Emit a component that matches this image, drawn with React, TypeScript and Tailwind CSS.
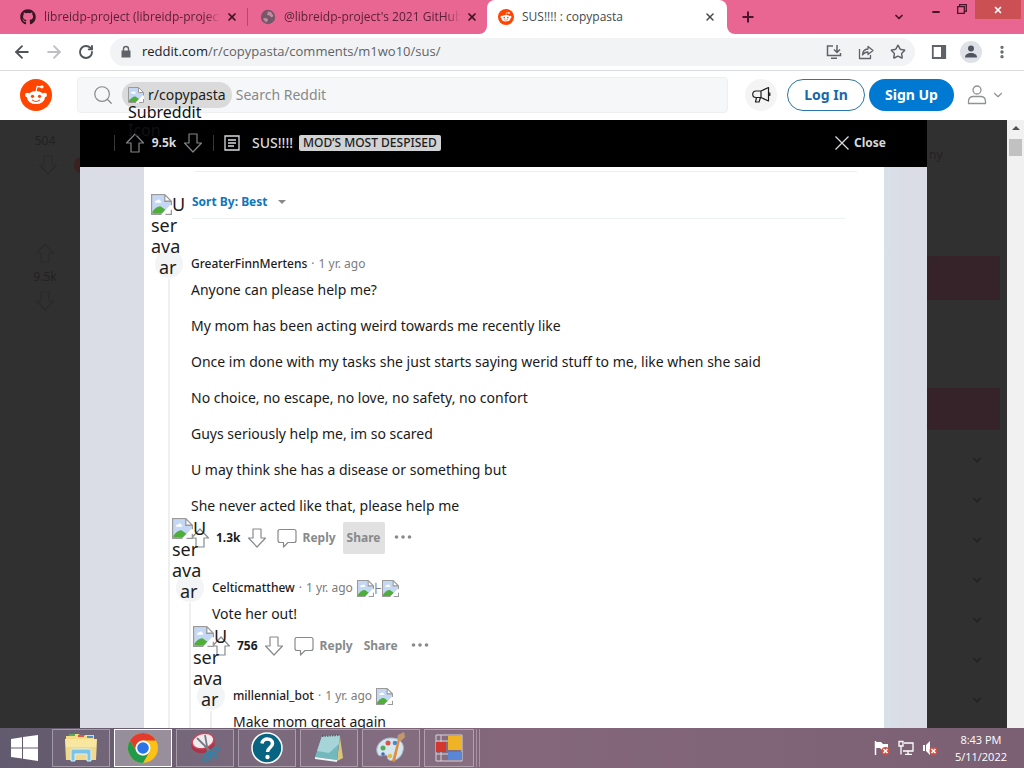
import React from "react";
import {
  ArrowLeft,
  ArrowRight,
  RotateCw,
  Star,
  Plus,
  X,
  ChevronDown,
  EllipsisVertical,
  Search,
  Minus,
} from "lucide-react";
import { FaGithub } from "react-icons/fa";

const noto = "font-['Noto_Sans',sans-serif]";
const chrome = "font-['Open_Sans','Noto_Sans',sans-serif]";

function Snoo({ className }: { className: string }) {
  return (
    <svg viewBox="0 0 20 20" className={className} aria-hidden="true">
      <circle cx="10" cy="10" r="10" fill="#ff4500" />
      <g fill="#fff">
        <ellipse cx="10" cy="11.6" rx="5.6" ry="4.1" />
        <circle cx="4.6" cy="10" r="1.45" />
        <circle cx="15.4" cy="10" r="1.45" />
        <circle cx="13.7" cy="4.9" r="1.05" />
      </g>
      <path d="M10 8l.7-3.4 2.6.5" fill="none" stroke="#fff" strokeWidth=".7" />
      <circle cx="7.8" cy="10.8" r="1" fill="#ff4500" />
      <circle cx="12.2" cy="10.8" r="1" fill="#ff4500" />
      <path d="M7.8 13.2c1.2 1 3.2 1 4.4 0" fill="none" stroke="#ff4500" strokeWidth=".7" strokeLinecap="round" />
    </svg>
  );
}

function BrokenImage({ className }: { className: string }) {
  return (
    <svg viewBox="0 0 16 16" className={className} aria-hidden="true">
      <path d="M.5.5h10l5 5v10H.5z" fill="#fff" />
      <path d="M1 1h9.500v4.500H15V10L9 15H1z" fill="#c4d8f6" />
      <path d="M3 6.200c0-1 1-1.600 1.800-1.200.6-1.200 2.400-.8 2.400.4.9 0 .9 1.300 0 1.300H3.600z" fill="#fff" />
      <path d="M1 15v-1.500C3 11 5.500 9 7.500 9.500L11 12l-3 3z" fill="#4fae3a" />
      <path d="M15.500 7.500L8 15.500h3l4.500-4z" fill="#fff" />
      <path d="M8 15.500H.5V.5h10l5 5v3M15.500 12v3.500H11M10.500.5v5h5" fill="none" stroke="#9a9a9a" />
    </svg>
  );
}

function VoteArrow({ down, className }: { down?: boolean; className: string }) {
  return (
    <svg viewBox="0 0 20 20" className={className} aria-hidden="true">
      <path
        d={down ? "M10 19L1.500 10H6V1h8v9h4.500z" : "M10 1l8.500 9H14v9H6v-9H1.500z"}
        fill="none"
        stroke="currentColor"
        strokeWidth="1.200"
        strokeLinejoin="round"
      />
    </svg>
  );
}

function Bubble() {
  return (
    <svg viewBox="0 0 20 20" className="size-5" fill="none" stroke="currentColor" strokeWidth="1.200" aria-hidden="true">
      <path d="M3 1.500h14q2 0 2 2v9q0 2-2 2h-6L6.500 19v-4.500H3q-2 0-2-2v-9q0-2 2-2z" strokeLinejoin="round" />
    </svg>
  );
}

function Tab({ title, icon }: { title: string; icon: React.ReactNode }) {
  return (
    <div className="flex w-[239px] min-w-0 items-center pr-[9px] pl-3">
      {icon}
      <span className="ml-2 min-w-0 flex-1 overflow-hidden whitespace-nowrap text-[#5c2038] [mask-image:linear-gradient(to_right,#000_92%,transparent)]">
        {title}
      </span>
      <button aria-label="Close tab" className="ml-[6px] text-[#3d1223]">
        <X className="size-3" strokeWidth={3.500} />
      </button>
    </div>
  );
}

function Browser() {
  return (
    <div className={`${chrome} shrink-0 text-xs`}>
      <div className="flex h-[34px] bg-[#e86691]">
        <div className="flex min-w-0 pl-2">
          <Tab title="libreidp-project (libreidp-project)" icon={<FaGithub className="size-4 shrink-0 text-[#3b1525]" />} />
          <span className="my-2 w-px bg-[#b4486d]" />
          <Tab
            title="@libreidp-project's 2021 GitHub"
            icon={
              <svg viewBox="0 0 16 16" className="size-4 shrink-0">
                <circle cx="8" cy="8" r="7.200" fill="#75576a" />
                <path d="M3 10l1.500-1 3 .5.5 2-2 2zM8 2.500l3 .5 2.500 4-2 1.500-2-2-2.500-.5z" fill="#c08aa0" />
              </svg>
            }
          />
        </div>
        <div className="relative flex w-[240px] shrink-0 items-center rounded-t-lg bg-white pr-[11px] pl-[11px] text-[#45484c]">
          <span className="absolute bottom-0 -left-2 size-2 bg-white">
            <span className="block size-full rounded-br-lg bg-[#e86691]" />
          </span>
          <span className="absolute -right-2 bottom-0 size-2 bg-white">
            <span className="block size-full rounded-bl-lg bg-[#e86691]" />
          </span>
          <Snoo className="size-4" />
          <span className="ml-2 flex-1">SUS!!!! : copypasta</span>
          <button aria-label="Close tab">
            <X className="size-3" strokeWidth={3} />
          </button>
        </div>
        <button aria-label="New tab" className="ml-[11px] px-[2px] text-[#4a142a]">
          <Plus className="size-4" strokeWidth={3} />
        </button>
        <div className="ml-auto flex items-start text-[#4a142a]">
          <button aria-label="Search tabs" className="mt-[11px] mr-[26px]">
            <ChevronDown className="size-3" strokeWidth={3.500} />
          </button>
          <button aria-label="Minimize" className="mt-[7px] mr-4">
            <Minus className="size-[10px]" strokeWidth={5} />
          </button>
          <button aria-label="Restore" className="mt-1 mr-2">
            <svg viewBox="0 0 10 10" className="size-[10px]" fill="none" stroke="currentColor" strokeWidth="1.300">
              <path d="M.7 2.700h6.600v6.600H.7zM2.700 2.700V.7h6.600v6.600h-2" />
            </svg>
          </button>
          <button aria-label="Close window" className="mr-[3px] flex h-[19px] w-[46px] items-center justify-center bg-[#cb5054] text-white">
            <X className="size-[10px]" strokeWidth={4} />
          </button>
        </div>
      </div>
      <div className="flex h-9 items-center bg-white pr-[14px] pl-3 text-[#5f6368]">
        <button aria-label="Back" className="mr-3 text-[#505357]"><ArrowLeft className="size-5" strokeWidth={2.200} /></button>
        <button aria-label="Forward" className="mr-3 text-[#bdbfc2]"><ArrowRight className="size-5" strokeWidth={2.200} /></button>
        <button aria-label="Reload" className="mr-4 ml-[2px] text-[#505357]"><RotateCw className="size-4" strokeWidth={2.800} /></button>
        <div className="flex h-7 flex-1 items-center rounded-full bg-[#f1f3f4] pr-[9px] pl-[9px] text-[13px]">
          <svg viewBox="0 0 14 14" className="mr-[9px] size-[14px]" aria-hidden="true">
            <path d="M4.500 6V4a2.500 2.500 0 015 0v2" fill="none" stroke="#5f6368" strokeWidth="1.400" />
            <path d="M2.500 5.500h9v7h-9z" fill="#5f6368" />
          </svg>
          <span className="flex-1 whitespace-nowrap"><span className="text-[#202124]">reddit.com</span>/r/copypasta/comments/m1wo10/sus/</span>
          <div className="flex items-center gap-4">
            <svg viewBox="0 0 16 16" className="size-4" fill="none" stroke="currentColor" strokeWidth="1.500" role="img" aria-label="Install">
              <path d="M7 2H1.500v9.500h13V9M5 14.200h6M11 1v7M8 5.500l3 3 3-3" />
            </svg>
            <svg viewBox="0 0 16 16" className="size-4" fill="none" stroke="currentColor" strokeWidth="1.300" role="img" aria-label="Share">
              <path d="M1.500 5v9.500h11V11M10 2.500l5 4-5 4V8C7.500 8 6 8.500 4.500 11 4.500 7.500 6.500 5.300 10 5z" strokeLinejoin="round" />
            </svg>
            <Star className="size-4" strokeWidth={2.200} />
          </div>
        </div>
        <svg viewBox="0 0 16 16" className="ml-4 size-4" role="img" aria-label="Side panel">
          <path d="M1.800 2h12.400v12H1.800z" fill="none" stroke="#5f6368" strokeWidth="1.800" />
          <path d="M10 2h4v12h-4z" fill="#5f6368" />
        </svg>
        <svg viewBox="0 0 22 22" className="ml-[13px] size-[22px]" role="img" aria-label="Profile">
          <circle cx="11" cy="11" r="11" fill="#dee1e6" />
          <circle cx="11" cy="7.500" r="3" fill="#4d5660" />
          <path d="M5 16.500c0-3 2.500-4.500 6-4.500s6 1.500 6 4.500z" fill="#4d5660" />
        </svg>
        <button aria-label="Menu" className="ml-3"><EllipsisVertical className="size-4" strokeWidth={3} /></button>
      </div>
    </div>
  );
}

function RedditHeader() {
  return (
    <header className="relative z-10 flex h-[50px] shrink-0 items-center border-t border-[#d9dbdd] bg-white pr-[19px] pb-[2px] pl-5">
      <a href="#home" aria-label="Reddit home"><Snoo className="size-8" /></a>
      <label className="ml-[25px] flex h-9 flex-1 items-center rounded-sm border border-[#edeff1] bg-[#f6f7f8] pl-[14px]">
        <Search className="size-[22px] text-[#878a8c]" strokeWidth={1.300} />
        <span className="relative ml-2 flex h-[26px] items-center rounded-full bg-[#dadada] pr-[6px] pl-[6px]">
          <BrokenImage className="size-4" />
          <span className={`${noto} ml-1 text-sm text-[#1c1c1c]`}>r/copypasta</span>
          <span className={`${noto} absolute top-[21px] left-[6px] text-base leading-[18px] text-[#111]`}>
            Subreddit Icon
          </span>
        </span>
        <input
          aria-label="Search Reddit"
          placeholder="Search Reddit"
          className={`${noto} ml-1 min-w-0 flex-1 bg-transparent text-sm outline-none placeholder:text-[#878a8c]`}
        />
      </label>
      <button aria-label="Advertise" className="ml-[17px] flex size-8 items-center justify-center rounded-full bg-[#f4f4f5]">
        <svg viewBox="0 0 20 20" className="size-5" fill="none" stroke="#1c1c1c" strokeWidth="1.200" strokeLinejoin="round">
          <path d="M10 6H5a3 3 0 000 6.500h5zM10 6l7.500-3.500v13.500L10 12.500M5.500 12.500L4.500 17H8l1.500-4.500M18.800 7.500v3.500" />
        </svg>
      </button>
      <button className={`${noto} ml-[10px] h-8 w-[78px] rounded-full border border-[#2a76a8] text-sm font-bold text-[#1769aa]`}>Log In</button>
      <button className={`${noto} ml-1 h-8 w-[85px] rounded-full bg-[#0079d3] text-sm font-bold text-white`}>Sign Up</button>
      <button aria-label="User menu" className="ml-[13px] flex items-center gap-1 text-[#909294]">
        <svg viewBox="0 0 20 20" className="size-5" fill="none" stroke="currentColor" strokeWidth="1.300">
          <circle cx="10" cy="5" r="4" />
          <path d="M1.500 18.500v-2c0-3 2-5 5-5h7c3 0 5 2 5 5v2z" strokeLinejoin="round" />
        </svg>
        <ChevronDown className="size-[14px]" strokeWidth={2} />
      </button>
    </header>
  );
}

function PostBar() {
  return (
    <div className="flex h-[47px] shrink-0 items-center bg-black pr-[41px] pb-px pl-[34px] text-[#d7dadc]">
      <span className="h-4 w-px bg-[#343536]" />
      <button aria-label="Upvote" className="ml-[10px] text-[#818384]"><VoteArrow className="size-5" /></button>
      <span className={`${noto} w-[38px] text-center text-xs font-bold`}>9.5k</span>
      <button aria-label="Downvote" className="text-[#818384]"><VoteArrow down className="size-5" /></button>
      <span className="ml-[10px] h-4 w-px bg-[#343536]" />
      <svg viewBox="0 0 16 16" className="ml-[10px] size-4" fill="none" stroke="currentColor" strokeWidth="1.300" aria-hidden="true">
        <path d="M1 1h14v14H1zM4 5h8M4 8h8M4 11h6" />
      </svg>
      <h1 className={`${noto} ml-3 text-sm font-medium`}>SUS!!!!</h1>
      <span className={`${noto} ml-[6px] rounded-xs bg-[#d0d2d4] px-1 text-xs leading-4 font-medium whitespace-nowrap text-[#1c1c1c]`}>
        MOD’S MOST DESPISED
      </span>
      <button className={`${noto} ml-auto flex items-center gap-1 text-xs font-bold`}>
        <svg viewBox="0 0 16 16" className="size-4" stroke="currentColor" strokeWidth="1.300">
          <path d="M1.500 1.500l13 13M14.500 1.500l-13 13" />
        </svg>
        Close
      </button>
    </div>
  );
}

type CommentProps = {
  author: string;
  badges?: string[];
  text: string[];
  votes?: string;
  shareActive?: boolean;
  children?: React.ReactNode;
};

function Comment({ author, badges = [], text, votes, shareActive, children }: CommentProps) {
  return (
    <article>
      <div className="flex h-7 items-center gap-2">
        <span className="relative size-7 shrink-0 rounded-full bg-[#f3f4f5]">
          <span className={`${noto} absolute bottom-0 -left-1 flex w-9 flex-col text-lg leading-[21px] text-[#1c1c1c]`}>
            <span className="flex"><BrokenImage className="size-[21px] shrink-0" />U</span>
            <span>ser</span>
            <span>ava</span>
            <span className="pl-2">ar</span>
          </span>
        </span>
        <p className={`${noto} flex items-center text-xs whitespace-nowrap text-[#7c7c7c]`}>
          <a href="#user" className="font-medium text-[#1c1c1c]">{author}</a>
          <span className="px-1">·</span>
          <span>1 yr. ago</span>
          <span className="ml-1 flex items-center">
            {badges.map((b, i) => (
              <span key={i} className="flex items-center text-base leading-4">
                <BrokenImage className="size-[17px]" />{b}
              </span>
            ))}
          </span>
        </p>
      </div>
      <div className="mt-px ml-[13px] border-l-2 border-[#edeff1]">
        <div className={`${noto} flex flex-col gap-[15px] pl-[21px] text-sm leading-[21px] text-[#1a1a1b]`}>
          {text.map((t) => <p key={t}>{t}</p>)}
        </div>
        {votes && (
          <div className={`${noto} mt-[6px] flex h-8 items-center pl-5 text-xs font-bold text-[#878a8c]`}>
            <button aria-label="Upvote"><VoteArrow className="size-5" /></button>
            <span className="px-[6px] text-[#1c1c1c]">{votes}</span>
            <button aria-label="Downvote"><VoteArrow down className="size-5" /></button>
            <button className="ml-[10px] flex items-center gap-[6px]"><Bubble />Reply</button>
            <button className={shareActive ? "ml-[7px] h-8 rounded-xs bg-[#e1e1e2] px-1" : "ml-[7px] h-8 px-1"}>Share</button>
            <button aria-label="More" className="ml-[9px] pb-[2px]">
              <svg viewBox="0 0 18 4" className="h-1 w-[18px]" fill="currentColor">
                <circle cx="2.500" cy="2" r="1.800" /><circle cx="9" cy="2" r="1.800" /><circle cx="15.500" cy="2" r="1.800" />
              </svg>
            </button>
          </div>
        )}
        {children && <div className="mt-5 pl-[6px]">{children}</div>}
      </div>
    </article>
  );
}

function Thread() {
  return (
    <main className="min-w-0 flex-1 bg-white pr-[27px] pl-[11px]">
      <div className="ml-10 border-b border-[#edeff1] pt-1" />
      <div className="mr-3 ml-[37px] flex h-[47px] items-end border-b border-[#edeff1] pb-2">
        <button className={`${noto} flex items-center gap-[10px] text-xs font-bold text-[#0f75bc]`}>
          Sort By: Best
          <svg viewBox="0 0 8 4" className="h-1 w-2" fill="#878a8c"><path d="M0 0h8L4 4z" /></svg>
        </button>
      </div>
      <div className="pt-[31px]">
        <Comment
          author="GreaterFinnMertens"
          votes="1.3k"
          shareActive
          text={[
            "Anyone can please help me?",
            "My mom has been acting weird towards me recently like",
            "Once im done with my tasks she just starts saying werid stuff to me, like when she said",
            "No choice, no escape, no love, no safety, no confort",
            "Guys seriously help me, im so scared",
            "U may think she has a disease or something but",
            "She never acted like that, please help me",
          ]}
        >
          <Comment author="Celticmatthew" votes="756" badges={["⊦", ""]} text={["Vote her out!"]}>
            <Comment author="millennial_bot" badges={[""]} text={["Make mom great again"]}>
              <div className="h-10" />
            </Comment>
          </Comment>
        </Comment>
      </div>
    </main>
  );
}

function Page() {
  return (
    <div className="flex min-h-0 flex-1 overflow-hidden">
      <aside className={`${noto} flex w-20 shrink-0 flex-col items-center overflow-hidden bg-[#303030] pr-[10px] pl-5 text-xs text-[#222223]`}>
        <span className="mt-[13px] leading-4">504</span>
        <span className="mt-[6px] flex w-full items-center justify-end">
          <span className="text-[#2a2a2b]"><VoteArrow down className="size-5" /></span>
          <span className="-mr-5 ml-4 size-4 shrink-0 rounded-full bg-[#3a2020]" />
        </span>
        <span className="mt-[68px] text-[#2a2a2b]"><VoteArrow className="size-5" /></span>
        <span className="mt-[6px] leading-4">9.5k</span>
        <span className="mt-[6px] text-[#2a2a2b]"><VoteArrow down className="size-5" /></span>
      </aside>
      <section className="flex min-w-0 flex-1 flex-col">
        <PostBar />
        <div className="flex min-h-0 flex-1 overflow-hidden bg-[#dadde5]">
          <div className="w-16 shrink-0" />
          <Thread />
          <div className="w-[43px] shrink-0 bg-linear-to-r from-[#d8e1e8] to-[#dadce6] to-50%" />
        </div>
      </section>
      <aside className={`${noto} w-20 shrink-0 overflow-hidden bg-[#303030] pr-[7px] text-xs text-[#232323]`}>
        <p className="mt-[27px] pl-[2px] leading-4">ny</p>
        <div className="mt-[93px] h-11 bg-[#36232a]" />
        <div className="mt-[88px] h-[42px] bg-[#36232a]" />
        <div className="mt-[23px] flex flex-col gap-[26px] pl-[43px]">
          {[1, 2, 3, 4, 5, 6, 7].map((n) => (
            <ChevronDown key={n} className="size-[14px] text-[#202020]" strokeWidth={2} />
          ))}
        </div>
      </aside>
      <div className="flex w-[17px] shrink-0 flex-col items-center bg-[#f1f1f1]">
        <svg viewBox="0 0 8 4" className="mt-[6px] h-1 w-2" fill="#505050"><path d="M0 4h8L4 0z" /></svg>
        <span className="mt-[9px] h-[17px] w-[13px] bg-[#c1c1c1]" />
      </div>
    </div>
  );
}

const apps: { name: string; art: React.ReactNode }[] = [
  {
    name: "File Explorer",
    art: (
      <>
        <path d="M1 4h4l1-2h8l1 2h4l1-1h9v6H1z" fill="#f3dc83" />
        <path d="M4 2h6v2H4z" fill="#4cae55" /><path d="M13 3h6v2h-6z" fill="#e0554a" /><path d="M22 4h6v2h-6z" fill="#4a8fd0" />
        <path d="M0 7h32l-1 21H1z" fill="#f8e7a0" /><path d="M1 15h30v13H1z" fill="#f0d98a" />
        <path d="M6 29V19q0-2 2-2h16q2 0 2 2v10h-4v-7H10v7z" fill="#7cc4e6" stroke="#d9f1fb" />
      </>
    ),
  },
  {
    name: "Chrome",
    art: (
      <>
        <circle cx="16" cy="16" r="15" fill="#fbc116" />
        <path d="M3 8.500A15 15 0 0129 8.500H16a7.500 7.500 0 00-6.500 11.200z" fill="#e33b2e" />
        <path d="M3 8.500l6.500 11.200A7.500 7.500 0 0016 23.500c2.500 0 5-1.200 6.500-3.800L16 31A15 15 0 013 8.500z" fill="#229a4b" />
        <circle cx="16" cy="16" r="7.500" fill="#fff" /><circle cx="16" cy="16" r="5.800" fill="#2a73e8" />
      </>
    ),
  },
  {
    name: "Snipping Tool",
    art: (
      <>
        <ellipse cx="14" cy="12" rx="12" ry="9" fill="#a8364a" transform="rotate(-15 14 12)" />
        <ellipse cx="14" cy="9" rx="11" ry="7.500" fill="#f3ecee" stroke="#ca4559" strokeWidth="1.500" transform="rotate(-15 14 9)" />
        <path d="M8 6l14 14M16 3l3 17" stroke="#777c84" strokeWidth="1.800" />
        <ellipse cx="26" cy="18" rx="4.500" ry="2" fill="none" stroke="#397fa2" strokeWidth="2" transform="rotate(-20 26 18)" />
        <ellipse cx="17" cy="25" rx="2" ry="4.500" fill="none" stroke="#397fa2" strokeWidth="2" transform="rotate(20 17 25)" />
        <path d="M20 19l2 11M20 19l8 7" stroke="#397fa2" strokeWidth="2.500" />
      </>
    ),
  },
  {
    name: "Help",
    art: (
      <>
        <circle cx="16" cy="16" r="15" fill="#086480" stroke="#fff" strokeWidth="1.500" />
        <path d="M11 11.500c.5-6 10.500-6 10.500 0 0 4-5 4-5 8.500" fill="none" stroke="#fff" strokeWidth="3.500" />
        <circle cx="16.500" cy="25" r="2.200" fill="#fff" />
      </>
    ),
  },
  {
    name: "Notepad",
    art: (
      <>
        <path d="M27 5l3 21-6 3z" fill="#d9c67a" /><path d="M9 4l18-1-3 25-22-3z" fill="#72b8bd" />
        <path d="M9 4l18-1-1 9-10 9-12-2z" fill="#a6d4d8" /><path d="M2 25l22 3v2L2 27z" fill="#eef5f5" />
        <path d="M9 4l18-1" stroke="#5a6268" strokeWidth="2" strokeDasharray="1.500 1" />
      </>
    ),
  },
  {
    name: "Paint",
    art: (
      <>
        <path d="M2 20C0 12 9 5 17 6c8 0 13 6 11 13-2 8-10 11-14 9-3-2 0-5-4-5-4 1-7 2-8-3z" fill="#d6e6f0" stroke="#9fb8c8" />
        <circle cx="8" cy="16" r="2.500" fill="#54ab56" /><circle cx="13" cy="11" r="2.500" fill="#d95347" /><circle cx="8" cy="22" r="1.800" fill="#416eb8" /><circle cx="20" cy="11" r="2.300" fill="#4b88cf" /><circle cx="15" cy="24" r="2.200" fill="#e3bb3d" />
        <path d="M25 8L20 30l-3-1L23 7z" fill="#e18d3c" /><path d="M22 7l1-4 6-3 1 5-4 4z" fill="#c2996e" />
      </>
    ),
  },
  {
    name: "Control Grid",
    art: (
      <>
        <path d="M3 3h26v26H3zM3 9h12M8 3v26M3 22h26" fill="none" stroke="#d8d3da" />
        <path d="M3 10h10v10H3z" fill="#d3382f" /><path d="M15 4h14v14H15z" fill="#efb425" /><path d="M15 20h14v8H15z" fill="#5a86d6" />
      </>
    ),
  },
];

function Taskbar() {
  return (
    <footer className="flex h-10 shrink-0 items-stretch bg-linear-to-r from-[#625a6e] via-[#84677b] via-50% to-[#7b6074]">
      <button aria-label="Start" className="flex w-[52px] items-center pl-[11px]">
        <svg viewBox="0 0 28 26" className="h-[26px] w-7" fill="#fff">
          <path d="M0 4l11-1.700v10.200H0zM12 2.100L27 0v12.500H12zM0 13.500h11v10L0 22zM12 13.500h15V26l-15-2.200z" />
        </svg>
      </button>
      <div className="flex gap-1">
        {apps.map((a) => (
          <button
            key={a.name}
            aria-label={a.name}
            className={
              a.name === "Chrome"
                ? "my-px flex w-[58px] items-center justify-center border border-white bg-white/30"
                : "my-px flex w-[58px] items-center justify-center border border-white/35 bg-white/5 last:w-[50px]"
            }
          >
            <svg viewBox="0 0 32 32" className="size-8">{a.art}</svg>
          </button>
        ))}
      </div>
      <span className="my-px ml-[2px] w-px bg-white/30" />
      <span className="my-px ml-[2px] w-px bg-white/30" />
      <div className="ml-auto flex items-center gap-2 pr-[17px] text-white">
        <svg viewBox="0 0 16 16" className="size-4" role="img" aria-label="Action Center">
          <path d="M1.500 1v14" stroke="#fff" strokeWidth="1.500" /><path d="M2 2h5l2 2h5v6H8L6 8H2z" fill="#fff" />
          <circle cx="11.500" cy="11" r="4" fill="#d64f45" /><path d="M9.500 9l4 4M13.500 9l-4 4" stroke="#fff" strokeWidth="1.500" />
        </svg>
        <svg viewBox="0 0 16 16" className="size-4" fill="none" stroke="#fff" strokeWidth="1.300" role="img" aria-label="Network">
          <path d="M6 3h9v8H5M10 11v3M7 14.300h7M1 1.500h4V6H1zM3 6v8.500" />
        </svg>
        <svg viewBox="0 0 16 16" className="size-4" role="img" aria-label="Muted">
          <path d="M1 5h2v6H1zM4 5l4-4v14l-4-4z" fill="#fff" />
          <circle cx="11.500" cy="11" r="4" fill="#d64f45" /><path d="M9.500 9l4 4M13.500 9l-4 4" stroke="#fff" strokeWidth="1.500" />
        </svg>
        <div className={`${chrome} ml-[9px] text-center text-[11px] leading-[17px]`}>
          <p>8:43 PM</p>
          <p>5/11/2022</p>
        </div>
      </div>
    </footer>
  );
}

export default function App() {
  return (
    <div className="flex h-screen flex-col overflow-hidden bg-white">
      <Browser />
      <RedditHeader />
      <Page />
      <Taskbar />
    </div>
  );
}
